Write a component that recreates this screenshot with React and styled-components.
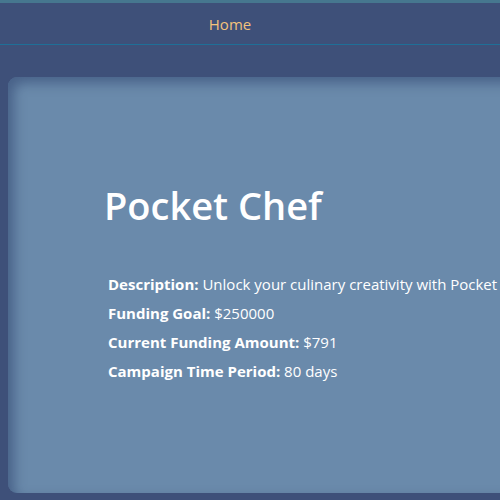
import React from "react";
import styled, { createGlobalStyle } from "styled-components";

const Global = createGlobalStyle`
  html, body {
    margin: 0;
    padding: 0;
    height: 100%;
    overflow: hidden;
    background: #3e5079;
    font-family: "Open Sans", "Noto Sans", sans-serif;
  }
  #root {
    height: 100%;
  }
`;

const Page = styled.div`
  height: 100%;
  display: flex;
  flex-direction: column;
  border-top: 3px solid #46778f;
  box-sizing: border-box;
`;

const Nav = styled.nav`
  height: 41px;
  display: flex;
  align-items: center;
  justify-content: center;
  padding-right: 40px;
  border-bottom: 1px solid #1f6f97;
  a {
    color: #f3c27c;
    font-size: 15px;
    text-decoration: none;
  }
`;

const Main = styled.main`
  flex: 1;
  padding: 32px 0 7px 8px;
  display: flex;
`;

const Card = styled.section`
  flex: 1;
  min-width: 600px;
  background: #6a8aab;
  border-radius: 9px;
  box-shadow: inset 6px 6px 12px rgba(45, 65, 110, 0.55);
  padding: 104px 0 0 96px;
  color: #fff;
  white-space: nowrap;
`;

const Title = styled.h1`
  margin: 0 0 41px;
  font-size: 38px;
  font-weight: 600;
  line-height: 48px;
`;

const Details = styled.div`
  padding-left: 4px;
`;

const Row = styled.p`
  margin: 0;
  font-size: 15px;
  line-height: 29px;
  b {
    font-weight: 700;
  }
`;

const details = [
  ["Description:", "Unlock your culinary creativity with Pocket Chef"],
  ["Funding Goal:", "$250000"],
  ["Current Funding Amount:", "$791"],
  ["Campaign Time Period:", "80 days"],
];

export default function App() {
  return (
    <Page>
      <Global />
      <Nav>
        <a href="#">Home</a>
      </Nav>
      <Main>
        <Card>
          <Title>Pocket Chef</Title>
          <Details>
            {details.map(([k, v]) => (
              <Row key={k}>
                <b>{k}</b> {v}
              </Row>
            ))}
          </Details>
        </Card>
      </Main>
    </Page>
  );
}
